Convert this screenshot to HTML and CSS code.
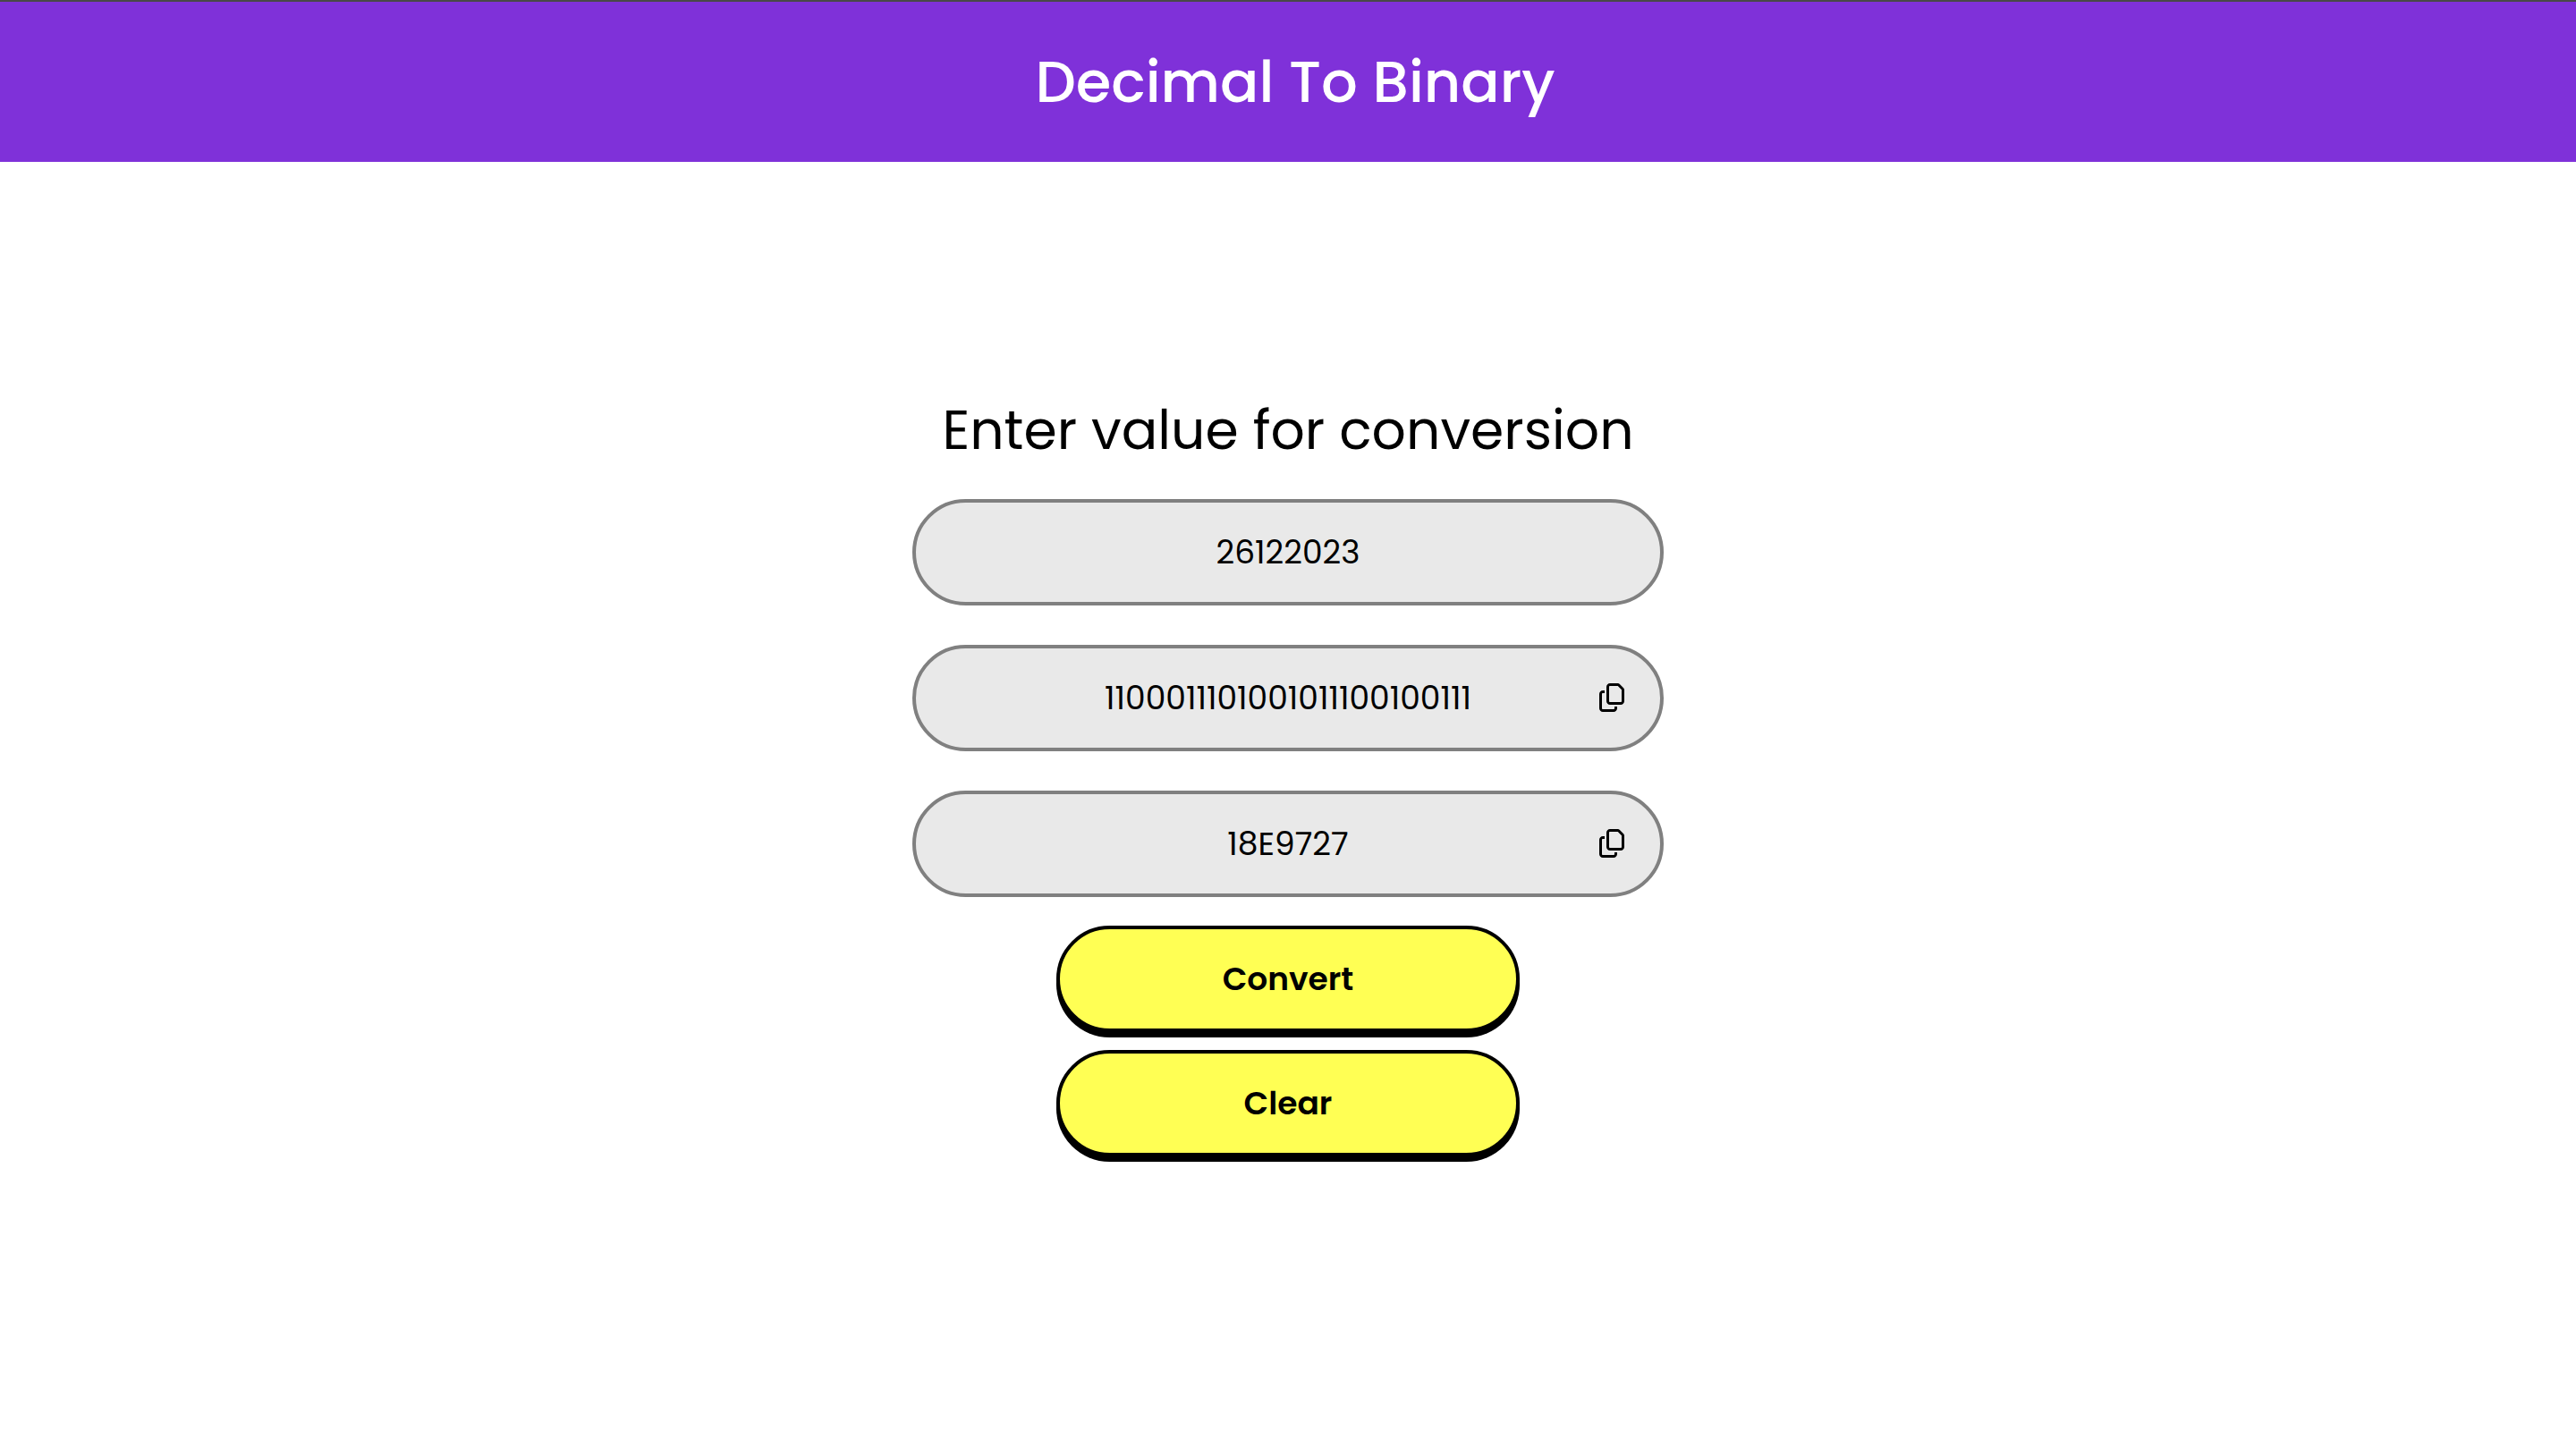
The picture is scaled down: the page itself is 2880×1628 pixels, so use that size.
FILE: index.html
```html
<!DOCTYPE html>
<html lang="en">
<head>
  <meta charset="utf-8">
  <meta name="viewport" content="width=device-width, initial-scale=1">
  <title>Decimal To Binary</title>
  <link rel="stylesheet" href="styles.css">
</head>
<body>
  <header class="header">
    <h1 class="header-title">Decimal To Binary</h1>
  </header>
  <main class="main">
    <form class="converter">
      <label class="converter-label" for="decimal">Enter value for conversion</label>
      <div class="fields">
        <div class="field">
          <input class="field-input" id="decimal" type="text" inputmode="numeric" value="26122023">
        </div>
        <div class="field">
          <input class="field-input" id="binary" type="text" aria-label="Binary" value="1100011101001011100100111" readonly>
          <button class="copy" type="button" aria-label="Copy binary">
            <svg class="copy-icon" viewBox="0 0 448 512" aria-hidden="true"><path d="M384 336H192c-8.8 0-16-7.2-16-16V64c0-8.8 7.2-16 16-16l140.1 0L400 115.9V320c0 8.8-7.2 16-16 16zM192 384H384c35.3 0 64-28.7 64-64V115.9c0-12.7-5.1-24.9-14.1-33.9L366.1 14.1c-9-9-21.2-14.1-33.9-14.1H192c-35.3 0-64 28.7-64 64V320c0 35.3 28.7 64 64 64zM64 128c-35.3 0-64 28.7-64 64V448c0 35.3 28.7 64 64 64H256c35.3 0 64-28.7 64-64V416H272v32c0 8.8-7.2 16-16 16H64c-8.8 0-16-7.2-16-16V192c0-8.8 7.2-16 16-16H96V128H64z"/></svg>
          </button>
        </div>
        <div class="field">
          <input class="field-input" id="hex" type="text" aria-label="Hexadecimal" value="18E9727" readonly>
          <button class="copy" type="button" aria-label="Copy hexadecimal">
            <svg class="copy-icon" viewBox="0 0 448 512" aria-hidden="true"><path d="M384 336H192c-8.8 0-16-7.2-16-16V64c0-8.8 7.2-16 16-16l140.1 0L400 115.9V320c0 8.8-7.2 16-16 16zM192 384H384c35.3 0 64-28.7 64-64V115.9c0-12.7-5.1-24.9-14.1-33.9L366.1 14.1c-9-9-21.2-14.1-33.9-14.1H192c-35.3 0-64 28.7-64 64V320c0 35.3 28.7 64 64 64zM64 128c-35.3 0-64 28.7-64 64V448c0 35.3 28.7 64 64 64H256c35.3 0 64-28.7 64-64V416H272v32c0 8.8-7.2 16-16 16H64c-8.8 0-16-7.2-16-16V192c0-8.8 7.2-16 16-16H96V128H64z"/></svg>
          </button>
        </div>
      </div>
      <div class="actions">
        <button class="action" type="button">Convert</button>
        <button class="action" type="reset">Clear</button>
      </div>
    </form>
  </main>
</body>
</html>
```
FILE: styles.css
```css
* {
  box-sizing: border-box;
}

body {
  margin: 0;
  background: #fff;
  color: #000;
  font-family: Poppins, Inter, sans-serif;
}

.header {
  padding: 42px 0 41px 16px;
  border-top: 2px solid #484848;
  background: #7f31d9;
  color: #fff;
  text-align: center;
}

.header-title {
  margin: 0;
  font-size: 64px;
  font-weight: 500;
  line-height: 96px;
}

.main {
  display: flex;
  justify-content: center;
  padding: 255px 24px 48px;
}

.converter {
  display: flex;
  flex-direction: column;
  align-items: center;
  gap: 32px;
  width: 100%;
  max-width: 840px;
}

.converter-label {
  font-size: 60px;
  line-height: 90px;
  text-align: center;
}

.fields {
  display: grid;
  gap: 44px;
  width: 100%;
}

.field {
  position: relative;
}

.field-input {
  display: block;
  width: 100%;
  height: 119px;
  padding: 0 80px;
  border: 4px solid #808080;
  border-radius: 60px;
  background: #e9e9e9;
  color: #000;
  font: inherit;
  font-size: 36px;
  text-align: center;
}

.copy {
  position: absolute;
  top: 0;
  right: 44px;
  display: flex;
  align-items: center;
  height: 100%;
  padding: 0 0 1px;
  border: 0;
  background: none;
  color: #000;
  cursor: pointer;
}

.copy-icon {
  width: 28px;
  height: 32px;
  fill: currentColor;
}

.actions {
  display: grid;
  gap: 20px;
  width: 100%;
  max-width: 518px;
}

.action {
  height: 119px;
  border: 4px solid #000;
  border-radius: 60px;
  background: #ffff54;
  box-shadow: 0 6px 0 #000;
  color: #000;
  font: inherit;
  font-size: 36px;
  font-weight: 600;
  cursor: pointer;
}
```
